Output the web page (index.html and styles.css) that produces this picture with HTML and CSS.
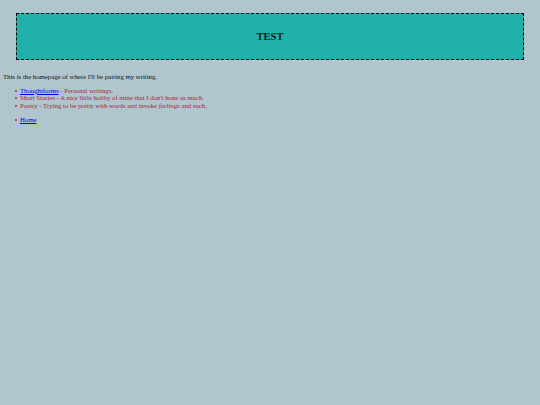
FILE: index.html
```html
<!DOCTYPE html>
<html>
<head>
<meta charset="utf-8">
<title>TEST</title>
<link rel="stylesheet" href="styles.css">
</head>
<body class="page">
<div class="header"><h1 class="title">TEST</h1></div>
<p class="intro">This is the homepage of where I'll be putting my writing.</p>
<ul class="list">
<li class="item"><a href="#">Thoughtforms</a> - Personal writings.</li>
<li class="item">Short Stories - A nice little hobby of mine that I don't hone as much.</li>
<li class="item">Poetry - Trying to be pretty with words and invoke <em>feelings</em> and such.</li>
</ul>
<ul class="list nav">
<li class="item"><a href="#">Home</a></li>
</ul>
</body>
</html>
```

FILE: styles.css
```css
html { background: #b0c5cd; }
.page {
  margin: 0 3px;
  padding-top: 13px;
  font-family: "Liberation Serif", "Times New Roman", serif;
  font-size: 6.75px;
  line-height: 7.5px;
  color: #111;
}
.header {
  margin: 0 13px 13px;
  height: 45px;
  border: 1px dashed #000;
  background: #20b2aa;
  display: flex;
  align-items: center;
  justify-content: center;
}
.title {
  margin: 0;
  font-size: 10.5px;
  line-height: 12px;
  font-weight: bold;
  color: #111;
}
.intro { margin: 0 0 6.4px; }
.list {
  margin: 0 0 6.4px;
  padding-left: 17px;
  color: #a0283a;
  list-style: none;
}
.item::before {
  content: "";
  display: inline-block;
  width: 2px;
  height: 2px;
  border-radius: 50%;
  background: currentColor;
  margin-left: -5px;
  margin-right: 3px;
  vertical-align: 1px;
}
.list a { color: #0000ee; }
```
